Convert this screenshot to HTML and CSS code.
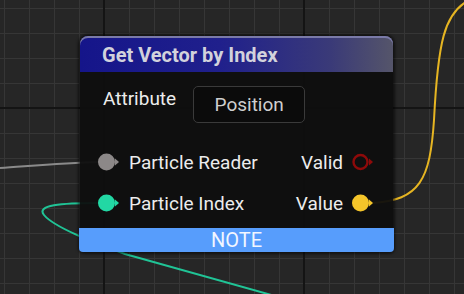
FILE: index.html
```html
<!DOCTYPE html>
<html lang="en">
<head>
  <meta charset="UTF-8" />
  <title>Get Vector by Index</title>
  <link rel="stylesheet" href="styles.css">
</head>
<body>
  <div class="graph">
    <svg class="wires" width="464" height="294" viewBox="0 0 464 294">
      <path class="wire wire-gray" d="M0,168 C30,166 60,163 100,162" />
      <path class="wire wire-teal" d="M100,203 C60,203 36,205 44,215 C54,227 90,241 125,254 L275,296" />
      <path class="wire wire-yellow" d="M372,203 C420,200 430,180 434,120 C438,40 445,15 466,2" />
    </svg>

    <div class="node">
      <div class="node-title">Get Vector by Index</div>
      <div class="node-body">
        <div class="attr-row">
          <span class="attr-label">Attribute</span>
          <span class="attr-value">Position</span>
        </div>
        <div class="pin-row">
          <div class="pin">
            <svg class="pin-icon" width="22" height="18" viewBox="0 0 22 18">
              <circle cx="8.5" cy="9" r="8.5" fill="#8c8888" />
              <path d="M17,5.5 L21,9 L17,12.5 Z" fill="#8c8888" />
            </svg>
            <span>Particle Reader</span>
          </div>
          <div class="pin">
            <span>Valid</span>
            <svg class="pin-icon" width="22" height="18" viewBox="0 0 22 18">
              <circle cx="8.5" cy="9" r="7" fill="none" stroke="#8e0a0a" stroke-width="2.4" />
              <path d="M17,5.5 L21,9 L17,12.5 Z" fill="#8e0a0a" />
            </svg>
          </div>
        </div>
        <div class="pin-row">
          <div class="pin">
            <svg class="pin-icon" width="22" height="18" viewBox="0 0 22 18">
              <circle cx="8.5" cy="9" r="8.5" fill="#22d8a4" />
              <path d="M17,5.5 L21,9 L17,12.5 Z" fill="#22d8a4" />
            </svg>
            <span>Particle Index</span>
          </div>
          <div class="pin">
            <span>Value</span>
            <svg class="pin-icon" width="22" height="18" viewBox="0 0 22 18">
              <circle cx="8.5" cy="9" r="8.5" fill="#f5c52a" />
              <path d="M17,5.5 L21,9 L17,12.5 Z" fill="#f5c52a" />
            </svg>
          </div>
        </div>
      </div>
      <div class="node-note">NOTE</div>
    </div>
  </div>
</body>
</html>
```

FILE: styles.css
```css
body {
  margin: 0;
  font-family: Roboto, "Liberation Sans", sans-serif;
  background: #262626;
}
.graph {
  position: relative;
  width: 464px;
  height: 294px;
  overflow: hidden;
  background-color: #262626;
  background-image:
    linear-gradient(to right, #141414 2px, transparent 2px),
    linear-gradient(to bottom, #141414 2px, transparent 2px),
    linear-gradient(to right, #363636 1px, transparent 1px),
    linear-gradient(to bottom, #363636 1px, transparent 1px);
  background-size: 200px 200px, 200px 200px, 25px 25px, 25px 25px;
  background-position: 103px 0, 0 107px, 4px 0, 0 8px;
}
.wires { position: absolute; left: 0; top: 0; }
.wire { fill: none; stroke-width: 2; }
.wire-gray { stroke: #8a8a8a; }
.wire-teal { stroke: #20c496; }
.wire-yellow { stroke: #e6b522; }

.node {
  position: absolute;
  left: 80px;
  top: 36px;
  width: 313px;
  border-radius: 8px 8px 4px 4px;
  box-shadow: 0 0 3px 2px rgba(0, 0, 0, 0.55);
}
.node-title {
  height: 36px;
  padding-left: 22px;
  line-height: 38px;
  font-size: 20px;
  font-weight: bold;
  color: #d2d2dc;
  border-radius: 8px 8px 0 0;
  background: linear-gradient(to right, #15158a 0%, #20208c 45%, #3a3a78 80%, #55556a 100%);
  box-shadow: inset 0 2px 0 #7a7aa8;
}
.node-body {
  background: rgba(14, 14, 14, 0.95);
  padding: 14px 0 12px;
  color: #ececec;
  font-size: 19px;
}
.attr-row {
  display: flex;
  align-items: flex-start;
  gap: 17px;
  padding-left: 23px;
  height: 37px;
}
.attr-label { margin-top: 1px; }
.attr-value {
  width: 110px;
  height: 35px;
  line-height: 36px;
  text-align: center;
  color: #cfcfcf;
  background: #0b0b0b;
  border: 1px solid #3a3a3a;
  border-radius: 5px;
}
.pin-row {
  display: flex;
  justify-content: space-between;
  align-items: center;
  height: 26px;
  padding: 0 19px 0 18px;
}
.attr-row + .pin-row { margin-top: 26px; }
.pin-row + .pin-row { margin-top: 15px; }
.pin {
  display: flex;
  align-items: center;
  gap: 9px;
}
.pin-icon { display: block; }

.node-note {
  height: 24px;
  line-height: 25px;
  margin: 0 -1px;
  text-align: center;
  font-size: 20px;
  color: #f2f6ff;
  background: #579dfc;
  border-radius: 0 0 4px 4px;
}
```
